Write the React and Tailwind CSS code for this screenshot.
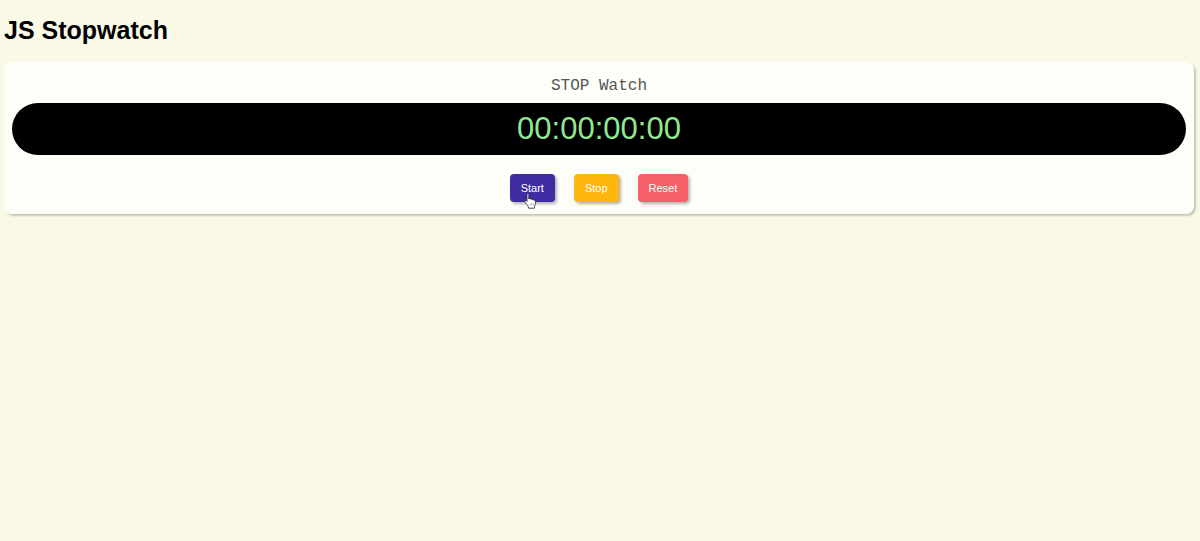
import { useEffect, useState } from "react";

function pad(n) {
  return String(n).padStart(2, "0");
}

function format(ticks) {
  const h = Math.floor(ticks / 360000);
  const m = Math.floor(ticks / 6000) % 60;
  const s = Math.floor(ticks / 100) % 60;
  return [h, m, s, ticks % 100].map(pad).join(":");
}

const buttonBase =
  "h-7 cursor-pointer rounded px-[11px] text-[11px] leading-4 text-white shadow-[2px_2px_3px_rgba(0,0,0,0.3)]";

function HandCursor() {
  return (
    <svg
      className="pointer-events-none absolute left-3.5 top-[19px]"
      width="12"
      height="16"
      viewBox="0 0 12 16"
      aria-hidden="true"
    >
      <path
        d="M3 1.500C3 .3 4.800.3 4.800 1.500V6c.3-.8 1.700-.7 1.800.2.5-.5 1.600-.3 1.700.5.5-.5 1.500-.2 1.600.6.8-.3 1.500.1 1.500.9v2.600c0 1.200-.9 2-1.100 4.400H4.600C4.400 13 3.300 12.200 2.400 10.900L.8 8.700C.3 7.800 1.500 7 2.200 7.700L3 8.500z"
        fill="#fff"
        stroke="#222"
        strokeWidth="0.8"
        strokeLinejoin="round"
      />
      <path d="M6.200 10v2.800M7.800 10v2.800M9.400 10v2.800" stroke="#888" strokeWidth="0.5" />
    </svg>
  );
}

export default function App() {
  const [ticks, setTicks] = useState(0);
  const [running, setRunning] = useState(false);

  useEffect(() => {
    if (!running) return undefined;
    const id = setInterval(() => setTicks((t) => t + 1), 10);
    return () => clearInterval(id);
  }, [running]);

  return (
    <div className="min-h-screen bg-[#f9f9e6] pl-1 pr-1.5 pt-3 font-['Liberation_Sans',Arial,sans-serif]">
      <h1 className="text-[25px] font-bold leading-9 text-black">JS Stopwatch</h1>
      <main className="mt-3.5 rounded-lg bg-[#fefef9] px-2 pb-3 pt-4 text-center shadow-[2px_2px_2px_rgba(0,0,0,0.2)]">
        <h2 className="font-['Liberation_Mono','Courier_New',monospace] text-[16px] leading-4 text-[#555]">
          STOP Watch
        </h2>
        <div className="mt-[9px] rounded-full bg-black py-2 text-[31px] leading-9 text-[#90e890]">
          <time>{format(ticks)}</time>
        </div>
        <div className="mt-[19px] flex justify-center gap-[19px]">
          <div className="relative flex">
            <button
              type="button"
              onClick={() => setRunning(true)}
              className={`${buttonBase} bg-[#3d2da0]`}
            >
              Start
            </button>
            <HandCursor />
          </div>
          <button
            type="button"
            onClick={() => setRunning(false)}
            className={`${buttonBase} bg-[#ffb60f]`}
          >
            Stop
          </button>
          <button
            type="button"
            onClick={() => {
              setRunning(false);
              setTicks(0);
            }}
            className={`${buttonBase} bg-[#f66067]`}
          >
            Reset
          </button>
        </div>
      </main>
    </div>
  );
}
